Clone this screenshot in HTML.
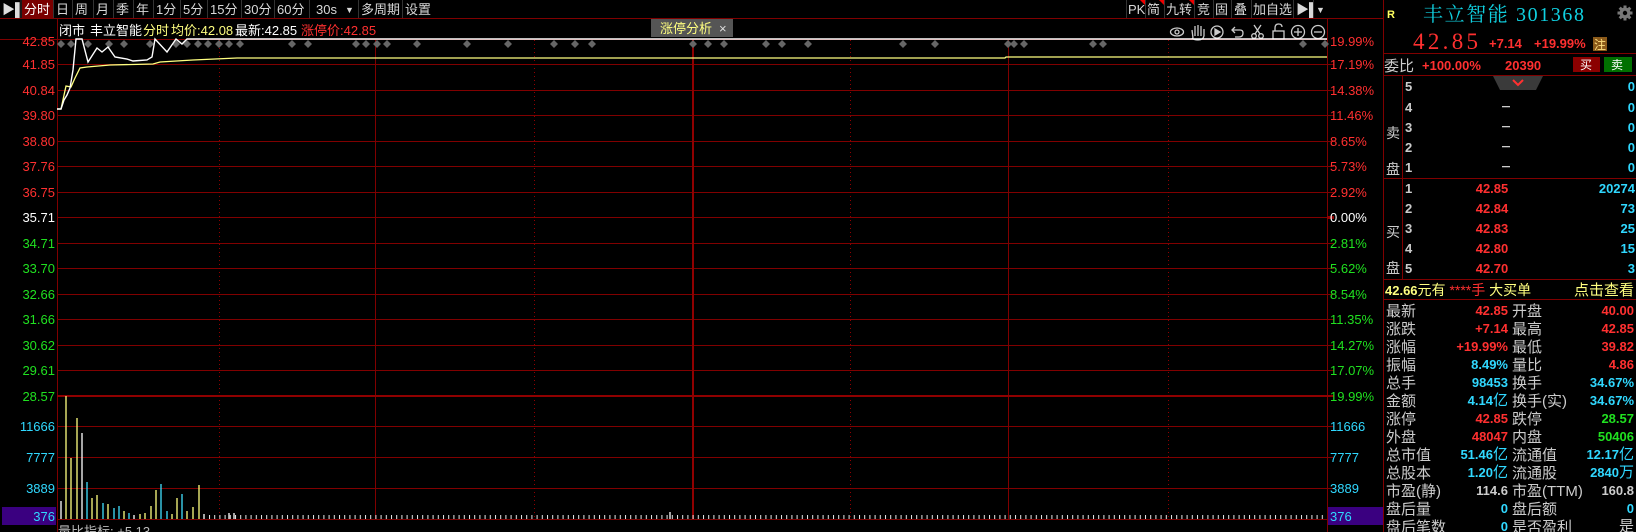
<!DOCTYPE html>
<html><head><meta charset="utf-8"><style>
html,body{margin:0;padding:0;background:#000;width:1636px;height:532px;overflow:hidden}
svg{display:block}
text{font-family:"Liberation Sans","Noto Sans CJK SC",sans-serif}
.s{font-family:"Liberation Serif","Noto Serif CJK SC",serif}
</style></head><body>
<svg width="1636" height="532" viewBox="0 0 1636 532" xmlns="http://www.w3.org/2000/svg">
<defs>
<pattern id="vb" x="209" y="0" width="5.2" height="532" patternUnits="userSpaceOnUse">
<rect x="0" y="515" width="1" height="4" fill="#e8e8e8"/>
</pattern>
</defs>
<!-- toolbar -->
<rect x="0" y="0" width="1327" height="18" fill="#000"/>
<line x1="0" y1="18.5" x2="1383" y2="18.5" stroke="#800000"/>
<rect x="22" y="0" width="31" height="18" fill="#7a0000"/>
<g font-size="13" fill="#d8d8d8">
<text x="2" y="14" fill="#ddd">▶▌</text>
<text x="24" y="14" fill="#fff">分时</text>
<text x="56" y="14">日</text><text x="75" y="14">周</text><text x="96" y="14">月</text><text x="116" y="14">季</text><text x="136" y="14">年</text>
<text x="156" y="14">1分</text><text x="183" y="14">5分</text><text x="210" y="14">15分</text><text x="244" y="14">30分</text><text x="277" y="14">60分</text>
<text x="316" y="14">30s</text><text x="345" y="13" font-size="9">▼</text><text x="361" y="14">多周期</text><text x="405" y="14">设置</text>
<text x="1128" y="14">PK</text><text x="1147" y="14">简</text><text x="1166" y="14">九转</text><text x="1197" y="14">竞</text><text x="1215" y="14">固</text><text x="1234" y="14">叠</text><text x="1253" y="14">加自选</text><text x="1296" y="14">▶▌</text><text x="1316" y="13" font-size="9">▼</text>
</g>
<g stroke="#333" stroke-width="1">
<line x1="21" y1="0" x2="21" y2="18"/><line x1="53.5" y1="0" x2="53.5" y2="18"/><line x1="72.5" y1="0" x2="72.5" y2="18"/><line x1="93.5" y1="0" x2="93.5" y2="18"/><line x1="113.5" y1="0" x2="113.5" y2="18"/><line x1="133.5" y1="0" x2="133.5" y2="18"/><line x1="153.5" y1="0" x2="153.5" y2="18"/><line x1="180.5" y1="0" x2="180.5" y2="18"/><line x1="207.5" y1="0" x2="207.5" y2="18"/><line x1="241.5" y1="0" x2="241.5" y2="18"/><line x1="274.5" y1="0" x2="274.5" y2="18"/><line x1="309.5" y1="0" x2="309.5" y2="18"/><line x1="358.5" y1="0" x2="358.5" y2="18"/><line x1="402.5" y1="0" x2="402.5" y2="18"/>
<line x1="1126.5" y1="0" x2="1126.5" y2="18"/><line x1="1145.5" y1="0" x2="1145.5" y2="18"/><line x1="1164.5" y1="0" x2="1164.5" y2="18"/><line x1="1194.5" y1="0" x2="1194.5" y2="18"/><line x1="1213.5" y1="0" x2="1213.5" y2="18"/><line x1="1231.5" y1="0" x2="1231.5" y2="18"/><line x1="1251.5" y1="0" x2="1251.5" y2="18"/><line x1="1293.5" y1="0" x2="1293.5" y2="18"/><line x1="1313.5" y1="0" x2="1313.5" y2="18"/>
</g>
<g fill="#e00"><polygon points="1140,0 1145,0 1145,5"/><polygon points="1159,0 1164,0 1164,5"/><polygon points="1189,0 1194,0 1194,5"/></g>

<!-- chart frame -->
<line x1="57.5" y1="19" x2="57.5" y2="532" stroke="#800000"/>
<line x1="1327.5" y1="19" x2="1327.5" y2="532" stroke="#800000"/>
<line x1="1383.5" y1="0" x2="1383.5" y2="532" stroke="#800000"/>
<g stroke="#800000" stroke-width="1">
<line x1="0" y1="39.5" x2="1327" y2="39.5"/><line x1="57" y1="64.5" x2="1327" y2="64.5"/><line x1="57" y1="90.5" x2="1327" y2="90.5"/><line x1="57" y1="115.5" x2="1327" y2="115.5"/><line x1="57" y1="141.5" x2="1327" y2="141.5"/><line x1="57" y1="166.5" x2="1327" y2="166.5"/><line x1="57" y1="192.5" x2="1327" y2="192.5"/><line x1="57" y1="217.5" x2="1327" y2="217.5"/><line x1="57" y1="243.5" x2="1327" y2="243.5"/><line x1="57" y1="268.5" x2="1327" y2="268.5"/><line x1="57" y1="294.5" x2="1327" y2="294.5"/><line x1="57" y1="319.5" x2="1327" y2="319.5"/><line x1="57" y1="345.5" x2="1327" y2="345.5"/><line x1="57" y1="370.5" x2="1327" y2="370.5"/>
<line x1="57" y1="426.5" x2="1327" y2="426.5"/><line x1="57" y1="457.5" x2="1327" y2="457.5"/><line x1="57" y1="488.5" x2="1327" y2="488.5"/><line x1="57" y1="519.5" x2="1327" y2="519.5"/>
<line x1="375.5" y1="39" x2="375.5" y2="519"/><line x1="1008.5" y1="39" x2="1008.5" y2="519"/>
</g>
<line x1="57" y1="396" x2="1327" y2="396" stroke="#900000" stroke-width="2"/>
<line x1="693" y1="39" x2="693" y2="519" stroke="#900000" stroke-width="2"/>
<g stroke="#900000" stroke-dasharray="1,3">
<line x1="219.5" y1="40" x2="219.5" y2="519"/><line x1="850.5" y1="40" x2="850.5" y2="519"/><line x1="1168.5" y1="40" x2="1168.5" y2="519"/><line x1="534.5" y1="40" x2="534.5" y2="519"/>
</g>
<!-- ticks on axes -->
<g stroke="#800000"><line x1="1327" y1="64.5" x2="1334" y2="64.5"/><line x1="1327" y1="90.5" x2="1334" y2="90.5"/><line x1="1327" y1="115.5" x2="1334" y2="115.5"/><line x1="1327" y1="141.5" x2="1334" y2="141.5"/><line x1="1327" y1="166.5" x2="1334" y2="166.5"/><line x1="1327" y1="192.5" x2="1334" y2="192.5"/><line x1="1327" y1="243.5" x2="1334" y2="243.5"/><line x1="1327" y1="268.5" x2="1334" y2="268.5"/><line x1="1327" y1="294.5" x2="1334" y2="294.5"/><line x1="1327" y1="319.5" x2="1334" y2="319.5"/><line x1="1327" y1="345.5" x2="1334" y2="345.5"/><line x1="1327" y1="370.5" x2="1334" y2="370.5"/><line x1="1327" y1="426.5" x2="1334" y2="426.5"/><line x1="1327" y1="457.5" x2="1334" y2="457.5"/><line x1="1327" y1="488.5" x2="1334" y2="488.5"/></g>
<rect x="1327" y="216" width="7" height="3" fill="#900000"/>
<rect x="1327" y="395" width="7" height="2" fill="#900000"/>

<!-- info line -->
<g font-size="13">
<text x="59" y="35" fill="#fff">闭市</text>
<text x="90" y="35" fill="#fff">丰立智能</text>
<text x="143" y="35" fill="#ffff80">分时</text>
<text x="171" y="35" fill="#ffff80">均价:<tspan fill="#ffff80">42.08</tspan></text>
<text x="235" y="35" fill="#fff">最新:42.85</text>
<text x="301" y="35" fill="#ff3030">涨停价:42.85</text>
</g>
<rect x="651" y="19" width="82" height="18" fill="#555"/>
<text x="660" y="33" font-size="13" fill="#ffff80">涨停分析</text>
<text x="719" y="33" font-size="13" fill="#ddd">×</text>

<!-- tool icons -->
<g stroke="#ccc" fill="none" stroke-width="1.3">
<ellipse cx="1177" cy="32" rx="6.5" ry="4"/><circle cx="1177" cy="32" r="2"/>
<path d="M1193,38 L1192,30 M1195,36 V26 M1198,36 V25 M1201,36 V26 M1204,36 V29 M1192,38 Q1194,40 1198,40 Q1203,40 1204,36"/>
<circle cx="1217" cy="32" r="6"/><path d="M1215,29 L1220,32 L1215,35Z" fill="#ccc"/>
<path d="M1233,30 H1240 Q1243,30 1243,33 Q1243,37 1239,37 H1235 M1235,27 L1232,30 L1235,33"/>
<circle cx="1254" cy="36" r="2.3"/><circle cx="1261" cy="36" r="2.3"/><path d="M1255,34 L1261,25 M1260,34 L1254,25"/>
<rect x="1273" y="31" width="11" height="8"/><path d="M1275,31 V28 Q1275,24 1278.5,24 Q1282,24 1282,27"/>
<circle cx="1298" cy="32" r="6.5"/><path d="M1294,32 H1302 M1298,28 V36"/>
<circle cx="1318" cy="32" r="6.5"/><path d="M1314,32 H1322"/>
</g>

<!-- diamonds -->
<g fill="#666">
<path id="d" d="M61,40 l4,4 l-4,4 l-4,-4z"/>
<path d="M71,40 l4,4 l-4,4 l-4,-4z"/><path d="M88,40 l4,4 l-4,4 l-4,-4z"/><path d="M109,40 l4,4 l-4,4 l-4,-4z"/><path d="M124,40 l4,4 l-4,4 l-4,-4z"/><path d="M150,40 l4,4 l-4,4 l-4,-4z"/><path d="M176,40 l4,4 l-4,4 l-4,-4z"/><path d="M187,40 l4,4 l-4,4 l-4,-4z"/><path d="M198,40 l4,4 l-4,4 l-4,-4z"/><path d="M208,40 l4,4 l-4,4 l-4,-4z"/><path d="M219,40 l4,4 l-4,4 l-4,-4z"/><path d="M229,40 l4,4 l-4,4 l-4,-4z"/><path d="M240,40 l4,4 l-4,4 l-4,-4z"/><path d="M292,40 l4,4 l-4,4 l-4,-4z"/><path d="M308,40 l4,4 l-4,4 l-4,-4z"/><path d="M356,40 l4,4 l-4,4 l-4,-4z"/><path d="M366,40 l4,4 l-4,4 l-4,-4z"/><path d="M377,40 l4,4 l-4,4 l-4,-4z"/><path d="M387,40 l4,4 l-4,4 l-4,-4z"/><path d="M417,40 l4,4 l-4,4 l-4,-4z"/><path d="M467,40 l4,4 l-4,4 l-4,-4z"/><path d="M508,40 l4,4 l-4,4 l-4,-4z"/><path d="M554,40 l4,4 l-4,4 l-4,-4z"/><path d="M575,40 l4,4 l-4,4 l-4,-4z"/><path d="M592,40 l4,4 l-4,4 l-4,-4z"/><path d="M693,40 l4,4 l-4,4 l-4,-4z"/><path d="M708,40 l4,4 l-4,4 l-4,-4z"/><path d="M724,40 l4,4 l-4,4 l-4,-4z"/><path d="M766,40 l4,4 l-4,4 l-4,-4z"/><path d="M782,40 l4,4 l-4,4 l-4,-4z"/><path d="M808,40 l4,4 l-4,4 l-4,-4z"/><path d="M903,40 l4,4 l-4,4 l-4,-4z"/><path d="M935,40 l4,4 l-4,4 l-4,-4z"/><path d="M1008,40 l4,4 l-4,4 l-4,-4z"/><path d="M1014,40 l4,4 l-4,4 l-4,-4z"/><path d="M1024,40 l4,4 l-4,4 l-4,-4z"/><path d="M1093,40 l4,4 l-4,4 l-4,-4z"/><path d="M1103,40 l4,4 l-4,4 l-4,-4z"/><path d="M1303,40 l4,4 l-4,4 l-4,-4z"/><path d="M1325,40 l4,4 l-4,4 l-4,-4z"/>
</g>

<!-- price lines -->
<polyline fill="none" stroke="#ffff80" stroke-width="1.3" points="57,109 61,109 66,86 71,87 75,78 80,68 87,67 110,65 153,64 160,62 193,60 237,58 1005,58 1006,57 1327,57"/>
<polyline fill="none" stroke="#fff" stroke-width="1.4" points="57,109 61,109 64,100 67,95 70,88 73,70 76,39 82,39 88,62 97,48 102,52 108,47 115,57 127,59 133,61 147,60 152,57 155,39 167,52 176,39 182,44 187,39 1327,39"/>

<!-- volume -->
<g stroke-width="1.3">
<line x1="61" y1="519" x2="61" y2="501" stroke="#fff"/>
<line x1="66" y1="519" x2="66" y2="396" stroke="#ffff80"/>
<line x1="71" y1="519" x2="71" y2="458" stroke="#ffff80"/>
<line x1="77" y1="519" x2="77" y2="418" stroke="#ffff80"/>
<line x1="82" y1="519" x2="82" y2="433" stroke="#fff"/>
<line x1="87" y1="519" x2="87" y2="482" stroke="#40e0ff"/>
<line x1="92" y1="519" x2="92" y2="498" stroke="#ffff80"/>
<line x1="97" y1="519" x2="97" y2="495" stroke="#ffff80"/>
<line x1="103" y1="519" x2="103" y2="503" stroke="#40e0ff"/>
<line x1="108" y1="519" x2="108" y2="504" stroke="#ffff80"/>
<line x1="114" y1="519" x2="114" y2="508" stroke="#40e0ff"/>
<line x1="119" y1="519" x2="119" y2="506" stroke="#40e0ff"/>
<line x1="124" y1="519" x2="124" y2="511" stroke="#ffff80"/>
<line x1="129" y1="519" x2="129" y2="513" stroke="#40e0ff"/>
<line x1="134" y1="519" x2="134" y2="515" stroke="#fff"/>
<line x1="140" y1="519" x2="140" y2="514" stroke="#ffff80"/>
<line x1="145" y1="519" x2="145" y2="513" stroke="#ffff80"/>
<line x1="151" y1="519" x2="151" y2="506" stroke="#ffff80"/>
<line x1="156" y1="519" x2="156" y2="490" stroke="#ffff80"/>
<line x1="161" y1="519" x2="161" y2="484" stroke="#40e0ff"/>
<line x1="167" y1="519" x2="167" y2="511" stroke="#40e0ff"/>
<line x1="172" y1="519" x2="172" y2="514" stroke="#ffff80"/>
<line x1="177" y1="519" x2="177" y2="498" stroke="#ffff80"/>
<line x1="182" y1="519" x2="182" y2="494" stroke="#40e0ff"/>
<line x1="187" y1="519" x2="187" y2="511" stroke="#ffff80"/>
<line x1="193" y1="519" x2="193" y2="507" stroke="#ffff80"/>
<line x1="199" y1="519" x2="199" y2="485" stroke="#ffff80"/>
<line x1="204" y1="519" x2="204" y2="514" stroke="#fff"/>
<line x1="229" y1="519" x2="229" y2="513" stroke="#fff"/>
<line x1="234" y1="519" x2="234" y2="513" stroke="#fff"/>
<line x1="670" y1="519" x2="670" y2="512" stroke="#fff"/>
</g>
<rect x="209" y="510" width="1118" height="9" fill="url(#vb)"/>

<!-- left axis labels -->
<g font-size="13" text-anchor="end">
<g fill="#ff3030"><text x="55" y="46">42.85</text><text x="55" y="69">41.85</text><text x="55" y="95">40.84</text><text x="55" y="120">39.80</text><text x="55" y="146">38.80</text><text x="55" y="171">37.76</text><text x="55" y="197">36.75</text></g>
<text x="55" y="222" fill="#fff">35.71</text>
<g fill="#20e020"><text x="55" y="248">34.71</text><text x="55" y="273">33.70</text><text x="55" y="299">32.66</text><text x="55" y="324">31.66</text><text x="55" y="350">30.62</text><text x="55" y="375">29.61</text><text x="55" y="401">28.57</text></g>
<g fill="#30d8ff"><text x="55" y="431">11666</text><text x="55" y="462">7777</text><text x="55" y="493">3889</text></g>
</g>
<rect x="2" y="507" width="54" height="18" fill="#3a0080"/>
<text x="55" y="521" font-size="13" fill="#30d8ff" text-anchor="end">376</text>
<text x="58" y="536" font-size="13" fill="#bbb">量比指标: +5.13</text>

<!-- right axis labels -->
<g font-size="13">
<g fill="#ff3030"><text x="1330" y="46">19.99%</text><text x="1330" y="69">17.19%</text><text x="1330" y="95">14.38%</text><text x="1330" y="120">11.46%</text><text x="1330" y="146">8.65%</text><text x="1330" y="171">5.73%</text><text x="1330" y="197">2.92%</text></g>
<text x="1330" y="222" fill="#fff">0.00%</text>
<g fill="#20e020"><text x="1330" y="248">2.81%</text><text x="1330" y="273">5.62%</text><text x="1330" y="299">8.54%</text><text x="1330" y="324">11.35%</text><text x="1330" y="350">14.27%</text><text x="1330" y="375">17.07%</text><text x="1330" y="401">19.99%</text></g>
<g fill="#30d8ff"><text x="1330" y="431">11666</text><text x="1330" y="462">7777</text><text x="1330" y="493">3889</text></g>
</g>
<rect x="1328" y="507" width="55" height="18" fill="#3a0080"/>
<text x="1330" y="521" font-size="13" fill="#30d8ff">376</text>

<!-- right panel -->
<text x="1387" y="18" font-size="11" font-weight="bold" fill="#ffff60">R</text>
<text x="1423" y="21" font-size="20" class="s" fill="#10d0e0" textLength="161">丰立智能 301368</text>
<g transform="translate(1625,13)" fill="#777"><circle r="5.5"/><g stroke="#777" stroke-width="3"><line x1="-7.5" y1="0" x2="7.5" y2="0"/><line x1="0" y1="-7.5" x2="0" y2="7.5"/><line x1="-5.3" y1="-5.3" x2="5.3" y2="5.3"/><line x1="-5.3" y1="5.3" x2="5.3" y2="-5.3"/></g><circle r="2.2" fill="#000"/></g>
<text x="1413" y="49" font-size="23" class="s" fill="#ff3030" textLength="65">42.85</text>
<text x="1489" y="48" font-size="13" font-weight="bold" fill="#ff3030">+7.14</text>
<text x="1534" y="48" font-size="13" font-weight="bold" fill="#ff3030">+19.99%</text>
<rect x="1593" y="37" width="14" height="14" fill="#8b5a1a"/>
<text x="1594" y="49" font-size="12" fill="#ffe080">注</text>
<line x1="1384" y1="53.5" x2="1636" y2="53.5" stroke="#800000"/>
<text x="1384" y="71" font-size="15" fill="#ccc">委比</text>
<text x="1422" y="70" font-size="13" font-weight="bold" fill="#ff3030">+100.00%</text>
<text x="1505" y="70" font-size="13" font-weight="bold" fill="#ff3030">20390</text>
<rect x="1573" y="57" width="27" height="15" fill="#8b0000"/><text x="1580" y="69" font-size="12" fill="#fff">买</text>
<rect x="1604" y="57" width="28" height="15" fill="#007000"/><text x="1611" y="69" font-size="12" fill="#fff">卖</text>
<line x1="1384" y1="75.5" x2="1636" y2="75.5" stroke="#800000"/>
<line x1="1402.5" y1="76" x2="1402.5" y2="279" stroke="#800000"/>
<path d="M1493,76 H1543 L1536,90 H1500Z" fill="#3a3a3a"/>
<path d="M1513,80 L1518,85 L1523,80" stroke="#ff3030" stroke-width="2" fill="none"/>
<g font-size="14" fill="#ccc">
<text x="1386" y="138">卖</text><text x="1386" y="174">盘</text>
<text x="1386" y="237">买</text><text x="1386" y="273">盘</text>
</g>
<g font-size="13" font-weight="bold">
<g fill="#ccc"><text x="1405" y="91">5</text><text x="1405" y="112">4</text><text x="1405" y="132">3</text><text x="1405" y="152">2</text><text x="1405" y="172">1</text>
<text x="1405" y="193">1</text><text x="1405" y="213">2</text><text x="1405" y="233">3</text><text x="1405" y="253">4</text><text x="1405" y="273">5</text></g>
<g fill="#ccc"><rect x="1502" y="106" width="8" height="1.3"/><rect x="1502" y="126" width="8" height="1.3"/><rect x="1502" y="146" width="8" height="1.3"/><rect x="1502" y="166" width="8" height="1.3"/></g>
<g fill="#30d8ff" text-anchor="end"><text x="1635" y="91">0</text><text x="1635" y="112">0</text><text x="1635" y="132">0</text><text x="1635" y="152">0</text><text x="1635" y="172">0</text>
<text x="1635" y="193">20274</text><text x="1635" y="213">73</text><text x="1635" y="233">25</text><text x="1635" y="253">15</text><text x="1635" y="273">3</text></g>
<g fill="#ff3030" text-anchor="middle"><text x="1492" y="193">42.85</text><text x="1492" y="213">42.84</text><text x="1492" y="233">42.83</text><text x="1492" y="253">42.80</text><text x="1492" y="273">42.70</text></g>
</g>
<line x1="1384" y1="178.5" x2="1636" y2="178.5" stroke="#800000"/>
<line x1="1384" y1="279.5" x2="1636" y2="279.5" stroke="#800000"/>
<text x="1385" y="295" font-size="14" fill="#ffff80"><tspan font-weight="bold" font-size="13">42.66</tspan>元有 <tspan fill="#ff3030">****手</tspan> 大买单</text>
<text x="1634" y="295" font-size="15" fill="#ffff80" text-anchor="end">点击查看</text>
<line x1="1384" y1="299.5" x2="1636" y2="299.5" stroke="#800000"/>
<g font-size="15" fill="#ccc">
<text x="1386" y="316">最新</text><text x="1386" y="334">涨跌</text><text x="1386" y="352">涨幅</text><text x="1386" y="370">振幅</text><text x="1386" y="388">总手</text><text x="1386" y="406">金额</text><text x="1386" y="424">涨停</text><text x="1386" y="442">外盘</text><text x="1386" y="460">总市值</text><text x="1386" y="478">总股本</text><text x="1386" y="496">市盈(静)</text><text x="1386" y="514">盘后量</text><text x="1386" y="532">盘后笔数</text>
<text x="1512" y="316">开盘</text><text x="1512" y="334">最高</text><text x="1512" y="352">最低</text><text x="1512" y="370">量比</text><text x="1512" y="388">换手</text><text x="1512" y="406">换手(实)</text><text x="1512" y="424">跌停</text><text x="1512" y="442">内盘</text><text x="1512" y="460">流通值</text><text x="1512" y="478">流通股</text><text x="1512" y="496">市盈(TTM)</text><text x="1512" y="514">盘后额</text><text x="1512" y="532">是否盈利</text>
</g>
<g font-size="13" font-weight="bold" text-anchor="end">
<text x="1508" y="315" fill="#ff3030">42.85</text><text x="1508" y="333" fill="#ff3030">+7.14</text><text x="1508" y="351" fill="#ff3030">+19.99%</text><text x="1508" y="369" fill="#30d8ff">8.49%</text><text x="1508" y="387" fill="#30d8ff">98453</text><text x="1508" y="405" fill="#30d8ff">4.14<tspan font-weight="normal" font-size="15">亿</tspan></text><text x="1508" y="423" fill="#ff3030">42.85</text><text x="1508" y="441" fill="#ff3030">48047</text><text x="1508" y="459" fill="#30d8ff">51.46<tspan font-weight="normal" font-size="15">亿</tspan></text><text x="1508" y="477" fill="#30d8ff">1.20<tspan font-weight="normal" font-size="15">亿</tspan></text><text x="1508" y="495" fill="#ccc">114.6</text><text x="1508" y="513" fill="#30d8ff">0</text><text x="1508" y="531" fill="#30d8ff">0</text>
<text x="1634" y="315" fill="#ff3030">40.00</text><text x="1634" y="333" fill="#ff3030">42.85</text><text x="1634" y="351" fill="#ff3030">39.82</text><text x="1634" y="369" fill="#ff3030">4.86</text><text x="1634" y="387" fill="#30d8ff">34.67%</text><text x="1634" y="405" fill="#30d8ff">34.67%</text><text x="1634" y="423" fill="#20e020">28.57</text><text x="1634" y="441" fill="#20e020">50406</text><text x="1634" y="459" fill="#30d8ff">12.17<tspan font-weight="normal" font-size="15">亿</tspan></text><text x="1634" y="477" fill="#30d8ff">2840<tspan font-weight="normal" font-size="15">万</tspan></text><text x="1634" y="495" fill="#ccc">160.8</text><text x="1634" y="513" fill="#30d8ff">0</text><text x="1634" y="531" fill="#ccc" font-weight="normal" font-size="15">是</text>
</g>
</svg>
</body></html>
